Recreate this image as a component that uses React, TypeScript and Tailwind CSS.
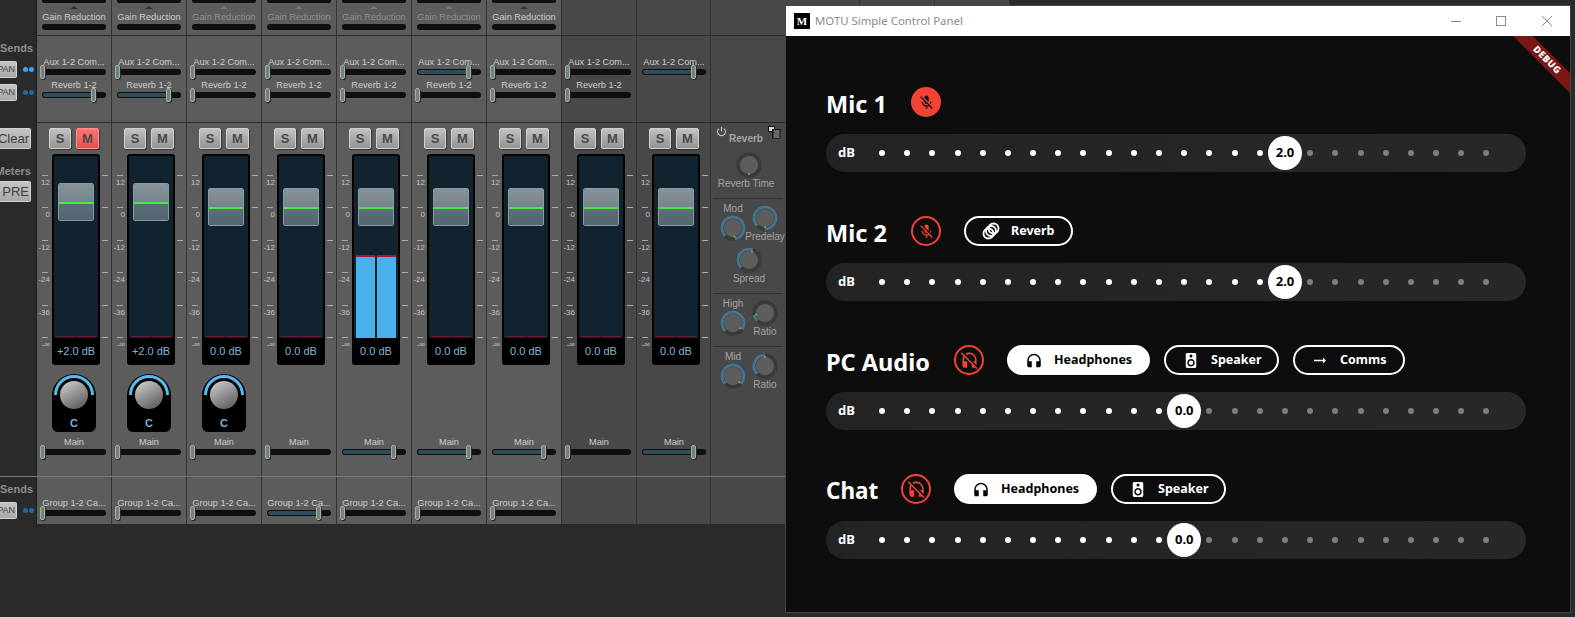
import React from "react";
import { MdMicOff, MdHeadphones, MdHeadsetOff, MdSpeaker, MdArrowRightAlt } from "react-icons/md";

const ticks = ["12", "0", "-12", "-24", "-36", "-∞"];
const stripW = ["w-[75px]", "w-[75px]", "w-[75px]", "w-[75px]", "w-[75px]", "w-[75px]", "w-[75px]", "w-[75px]", "w-[74px]"];
const stripBg = (i: number) => (i < 7 ? "bg-[#5c5c5c]" : "bg-[#484848]");

function Bar({ on }: { on?: boolean }) {
  return (
    <div className="relative ml-[5px] h-[6px] w-[64px] rounded-[3px] bg-[#0f0f0f]">
      {on && <div className="h-[6px] w-[52px] rounded-l-[3px] border border-[#0f0f0f] bg-[#2f4c5c]" />}
      <div
        className={
          "absolute top-[-4px] h-[14px] w-[5px] rounded-[2px] border border-[#a9a9a9] bg-[#6f8676] shadow-[1px_1px_1px_#2a2a2a] " +
          (on ? "left-[49px]" : "left-[-2px]")
        }
      />
    </div>
  );
}

function Label({ text, dim }: { text: string; dim?: boolean }) {
  return (
    <div
      className={
        "ml-[5px] h-[12px] w-[64px] whitespace-nowrap text-center text-[9.2px] leading-[12px] " +
        (dim ? "text-[#8f8f8f]" : "text-[#cdcdcd]")
      }
    >
      {text}
    </div>
  );
}

function SmallBtn({ children, w }: { children: React.ReactNode; w: string }) {
  return (
    <div
      className={
        "flex justify-end overflow-hidden rounded-r-[2px] border-y border-r border-[#d2d2d2] bg-gradient-to-b from-[#c4c4c4] to-[#a8a8a8] text-[#3f3f3f] " +
        w
      }
    >
      <span className="whitespace-nowrap pr-px">{children}</span>
    </div>
  );
}

function PanRow({ bright }: { bright?: boolean }) {
  return (
    <div className="flex items-center">
      <SmallBtn w="h-[17px] w-[17px] text-[9px] leading-[15px]">PAN</SmallBtn>
      <div className="ml-[6px] flex gap-px">
        <div className={"h-[5px] w-[5px] rounded-full " + (bright ? "bg-[#36a4f4]" : "bg-[#1f6a9e]")} />
        <div className={"h-[5px] w-[5px] rounded-full " + (bright ? "bg-[#36a4f4]" : "bg-[#1f6a9e]")} />
      </div>
    </div>
  );
}

function SM({ muted }: { muted?: boolean }) {
  const base = "flex h-[21px] items-center justify-center rounded-[2px] border border-[#cfcfcf] text-[13px] font-bold text-[#4a4a4a] shadow-[1px_1px_1px_#3a3a3a] ";
  return (
    <div className="flex gap-[5px] pl-[12px]">
      <div className={base + "w-[22px] bg-gradient-to-b from-[#c2c2c2] to-[#949494]"}>S</div>
      <div className={base + "w-[23px] " + (muted ? "border-[#ff8f8f] bg-gradient-to-b from-[#ff7474] to-[#e94f4f]" : "bg-gradient-to-b from-[#c2c2c2] to-[#949494]")}>M</div>
    </div>
  );
}

function Well({ db, raised, active }: { db: string; raised?: boolean; active?: boolean }) {
  return (
    <div className="flex h-[211px] w-[48px] flex-col rounded-[3px] bg-black">
      <div className="relative mx-[2px] mt-[2px] flex h-[182px] items-end gap-[2px] bg-[#10232f] px-[2px]">
        {[0, 1].map((k) => (
          <div key={k} className="flex w-[19px] flex-col">
            {active ? (
              <>
                <div className="h-[2px] bg-[#a3143a]" />
                <div className="h-[81px] bg-[#4ab0ea]" />
              </>
            ) : (
              <div className="mb-px h-px bg-[#6b1c2c]" />
            )}
          </div>
        ))}
        <div
          className={
            "absolute left-[4px] flex h-[38px] w-[36px] flex-col overflow-hidden rounded-[2px] border border-[#8a9aa0] " +
            (raised ? "top-[27px]" : "top-[32px]")
          }
        >
          <div className="h-[18px] bg-gradient-to-b from-[#87929a] to-[#75858c]" />
          <div className="h-[2px] shrink-0 bg-[#4fe64a]" />
          <div className="flex-1 bg-gradient-to-b from-[#5b6f79] to-[#536670]" />
        </div>
      </div>
      <div className="flex flex-1 items-center justify-center text-[11px] text-[#85b4d2]">{db}</div>
    </div>
  );
}

function Scale({ labels }: { labels?: boolean }) {
  return (
    <div className={"flex flex-col pt-[21px] " + (labels ? "w-[15px]" : "ml-[2px] w-[8px]")}>
      {ticks.map((t, i) => (
        <div key={t} className={i === 5 ? "h-[20px]" : "h-[32.4px]"}>
          <div className={"h-px w-[6px] " + (labels ? "ml-[5px] bg-[#a6a6a6]" : "bg-[#b0b0b0]")} />
          {labels && (
            <div className="whitespace-nowrap pr-[2px] pt-[2px] text-right text-[8px] leading-[9px] text-[#c4c4c4]">{t}</div>
          )}
        </div>
      ))}
    </div>
  );
}

function PanKnob({ id }: { id: number }) {
  return (
    <div className="ml-[15px] mt-[9px] flex h-[58px] w-[44px] flex-col items-center rounded-t-[22px] rounded-b-[6px] bg-black">
      <svg width="44" height="43" viewBox="0 0 44 43">
        <defs>
          <linearGradient id={"pk" + id} x1="0.2" y1="0" x2="0.8" y2="1">
            <stop offset="0" stopColor="#c9c9c9" />
            <stop offset="1" stopColor="#5a5a5a" />
          </linearGradient>
        </defs>
        <path d="M3.5 21 A18.5 18.5 0 0 1 40.5 21" fill="none" stroke="#5bb9ee" strokeWidth="3" />
        <circle cx="22" cy="21" r="14" fill={"url(#pk" + id + ")"} />
      </svg>
      <div className="text-[11px] font-bold leading-[12px] text-[#7fb2d4]">C</div>
    </div>
  );
}

function polar(r: number, a: number) {
  const t = ((a - 90) * Math.PI) / 180;
  return [14 + r * Math.cos(t), 14 + r * Math.sin(t)];
}

function Knob({ to, noArc }: { to: number; noArc?: boolean }) {
  const [x1, y1] = polar(11, -135);
  const [x2, y2] = polar(11, to);
  const [dx, dy] = polar(9, to);
  return (
    <svg width="28" height="28" viewBox="0 0 28 28" className="shrink-0">
      <circle cx="14" cy="14" r="11" fill="none" stroke="#3a3a3a" strokeWidth="3.5" />
      {!noArc && (
        <path
          d={`M${x1} ${y1} A11 11 0 ${to + 135 > 180 ? 1 : 0} 1 ${x2} ${y2}`}
          fill="none"
          stroke="#44738f"
          strokeWidth="3"
        />
      )}
      <circle cx="14" cy="14" r="9" fill="#5d5d5d" />
      <circle cx={dx} cy={dy} r="1" fill="#a5a53c" />
    </svg>
  );
}

const revText = "text-[10px] leading-[12px] text-[#a3a3a3] whitespace-nowrap text-center";

function KnobPair({ title, left, right, rightLabel }: { title: string; left: number; right: number; rightLabel: string }) {
  return (
    <div className="flex h-[43px] pl-[5px]">
      <div className="flex w-[30px] flex-col items-center">
        <div className={revText}>{title}</div>
        <div className="-mt-px">
          <Knob to={left} />
        </div>
      </div>
      <div className="ml-[2px] mt-px flex w-[30px] flex-col items-center">
        <Knob to={right} />
        <div className={revText + " -mt-px"}>{rightLabel}</div>
      </div>
    </div>
  );
}

function ReverbPanel() {
  return (
    <div className="flex h-full flex-col">
      <div className="mx-[2px] h-[76px] border-b border-[#2f2f2f]">
        <div className="flex h-[16px] items-start justify-between pl-[3px] pr-[2px] pt-[3px]">
          <svg width="11" height="11" viewBox="0 0 11 11" fill="none" stroke="#c9c9c9" strokeWidth="1.1">
            <path d="M3 2.6a4 4 0 1 0 5 0" />
            <path d="M5.5 1v4.5" />
          </svg>
          <svg width="13" height="13" viewBox="0 0 13 13">
            <rect x="0.5" y="0.5" width="6" height="5" fill="#d5d5d5" stroke="#111" />
            <rect x="4" y="3" width="8.5" height="9.5" fill="#111" />
            <path d="M5.5 5h6M5.5 7h6M5.5 9h6M5.5 11h6" stroke="#cfcfcf" strokeWidth="0.9" />
          </svg>
        </div>
        <div className={revText + " -mt-[6px] pr-[4px] font-bold"}>Reverb</div>
        <div className="mt-[6px] flex justify-center pl-[2px]">
          <Knob to={180} noArc />
        </div>
        <div className={revText + " -mt-px pr-[4px]"}>Reverb Time</div>
      </div>
      <div className="mx-[2px] h-[95px] border-b border-[#2f2f2f] pt-[4px]">
        <KnobPair title="Mod" left={170} right={180} rightLabel="Predelay" />
        <div className="flex flex-col items-center pl-[2px]">
          <Knob to={20} />
          <div className={revText + " -mt-px"}>Spread</div>
        </div>
      </div>
      <div className="mx-[2px] h-[53px] border-b border-[#2f2f2f] pt-[4px]">
        <KnobPair title="High" left={125} right={-100} rightLabel="Ratio" />
      </div>
      <div className="mx-[2px] pt-[4px]">
        <KnobPair title="Mid" left={135} right={0} rightLabel="Ratio" />
      </div>
    </div>
  );
}

function Mixer() {
  const aux = [0, 0, 0, 0, 0, 1, 0, 0, 1];
  const rev = [1, 1, 0, 0, 0, 0, 0, 0];
  const main = [0, 0, 0, 0, 1, 1, 1, 0, 1];
  const group = [0, 0, 0, 1, 0, 0, 0];
  const gainDim = [false, false, true, true, true, true, false];
  const dbs = ["+2.0 dB", "+2.0 dB", "0.0 dB", "0.0 dB", "0.0 dB", "0.0 dB", "0.0 dB", "0.0 dB", "0.0 dB"];
  const nums = [0, 1, 2, 3, 4, 5, 6, 7, 8];
  return (
    <div className="flex h-[617px] w-[785px] shrink-0 flex-col font-['Liberation_Sans']">
      <div className="flex h-[36px] border-b border-[#2c2c2c]">
        <div className="w-[37px] shrink-0 border-r border-[#1e1e1e]" />
        {nums.map((i) => (
          <div key={i} className={"border-r border-[#333] " + stripW[i] + " " + stripBg(i)}>
            {i < 7 && (
              <>
                <div className="ml-[5px] h-[3px] w-[64px] rounded-b-[2px] bg-[#0f0f0f]" />
                <div className="ml-[5px] mt-[3px] flex w-[64px] justify-center">
                  <div className={"h-0 w-0 border-x-[4px] border-b-[3px] border-x-transparent " + (gainDim[i] ? "border-b-[#777]" : "border-b-[#333]")} />
                </div>
                <div className="mt-[2px]">
                  <Label text="Gain Reduction" dim={gainDim[i]} />
                </div>
                <div className="ml-[5px] mt-px h-[6px] w-[64px] rounded-[3px] bg-[#0f0f0f]" />
              </>
            )}
          </div>
        ))}
        <div className="w-[74px] bg-[#484848]" />
      </div>

      <div className="flex h-[87px] border-b border-[#2c2c2c]">
        <div className="flex w-[37px] shrink-0 flex-col items-start border-r border-[#1e1e1e] pt-[5px]">
          <div className="h-[14px] text-[11px] font-bold leading-[14px] text-[#8d8d8d]">Sends</div>
          <div className="mt-[6px]"><PanRow bright /></div>
          <div className="mt-[6px]"><PanRow /></div>
        </div>
        {nums.map((i) => (
          <div key={i} className={"border-r border-[#333] pt-[20px] " + stripW[i] + " " + stripBg(i)}>
            <Label text="Aux 1-2 Com..." />
            <div className="mt-px"><Bar on={!!aux[i]} /></div>
            {i < 8 && (
              <>
                <div className="mt-[4px]"><Label text="Reverb 1-2" /></div>
                <div className="mt-px"><Bar on={!!rev[i]} /></div>
              </>
            )}
          </div>
        ))}
        <div className="w-[74px] bg-[#484848]" />
      </div>

      <div className="flex h-[354px] border-b border-[#777]">
        <div className="flex w-[37px] shrink-0 flex-col border-r border-[#1e1e1e] pt-[5px]">
          <SmallBtn w="h-[21px] w-[31px] text-[13px] leading-[19px]">Clear</SmallBtn>
          <div className="mt-[15px] flex h-[14px] w-[31px] justify-end overflow-hidden text-[11px] font-bold leading-[14px] text-[#8d8d8d]">Meters</div>
          <div className="mt-[3px]">
            <SmallBtn w="h-[21px] w-[31px] text-[13px] leading-[19px]">PRE</SmallBtn>
          </div>
        </div>
        {nums.map((i) => (
          <div key={i} className={"border-r border-[#333] pt-[5px] " + stripW[i] + " " + stripBg(i)}>
            <SM muted={i === 0} />
            <div className="mt-[5px] flex">
              <Scale labels />
              <Well db={dbs[i]} raised={i < 2} active={i === 4} />
              <Scale />
            </div>
            {i < 3 ? <PanKnob id={i} /> : <div className="mt-[9px] h-[58px]" />}
            <div className="mt-[4px]"><Label text="Main" /></div>
            <div className="mt-px"><Bar on={!!main[i]} /></div>
          </div>
        ))}
        <div className="w-[74px] bg-[#484848]">
          <ReverbPanel />
        </div>
      </div>

      <div className="flex h-[47px]">
        <div className="flex w-[37px] shrink-0 flex-col border-r border-[#1e1e1e] pt-[5px]">
          <div className="h-[14px] text-[11px] font-bold leading-[14px] text-[#8d8d8d]">Sends</div>
          <div className="mt-[6px]"><PanRow /></div>
        </div>
        {nums.map((i) => (
          <div key={i} className={"border-r border-[#333] pt-[20px] " + stripW[i] + " " + stripBg(i)}>
            {i < 7 && (
              <>
                <Label text="Group 1-2 Ca..." />
                <div className="mt-px"><Bar on={!!group[i]} /></div>
              </>
            )}
          </div>
        ))}
        <div className="w-[74px] bg-[#484848]" />
      </div>
    </div>
  );
}

function ReverbIcon() {
  return (
    <svg width="18" height="18" viewBox="0 0 18 18" fill="none" stroke="white" strokeWidth="1.9">
      <circle cx="11.5" cy="6.5" r="5" />
      <circle cx="9" cy="9" r="5" />
      <circle cx="6.5" cy="11.5" r="5" />
    </svg>
  );
}

function Pill({ icon, text, w, on }: { icon: React.ReactNode; text: string; w: string; on?: boolean }) {
  return (
    <div
      className={
        "flex h-[30px] items-center gap-[11px] rounded-full border-2 border-white pl-[16px] text-[12.5px] font-bold " +
        w +
        (on ? " bg-white text-black" : " text-white")
      }
    >
      <div className="flex w-[18px] items-center justify-center text-[21px]">{icon}</div>
      <span>{text}</span>
    </div>
  );
}

function Slider({ at, value }: { at: number; value: string }) {
  const cells = Array.from({ length: 25 }, (_, i) => i);
  return (
    <div className="mt-[17px] flex h-[38px] w-[700px] items-center rounded-full bg-gradient-to-r from-[#232323] to-[#282828]">
      <div className="w-[43.4px] shrink-0 pl-[12px] text-[13px] font-bold text-white">dB</div>
      {cells.map((i) => (
        <div key={i} className="flex w-[25.2px] shrink-0 justify-center">
          {i === at ? (
            <div className="flex h-[34px] w-[34px] shrink-0 items-center justify-center rounded-full bg-white text-[13px] font-bold text-black">
              {value}
            </div>
          ) : (
            <div className={"h-[6px] w-[6px] rounded-full " + (i < at ? "bg-white" : "bg-[#7e7e7e]")} />
          )}
        </div>
      ))}
    </div>
  );
}

function Header({ name, nameClass, children }: { name: string; nameClass: string; children: React.ReactNode }) {
  return (
    <div className="flex h-[30px] items-center gap-[24px]">
      <div className={"whitespace-nowrap pt-[4px] font-bold leading-[26px] text-white " + nameClass}>{name}</div>
      {children}
    </div>
  );
}

function MuteMic({ filled }: { filled?: boolean }) {
  return (
    <div
      className={
        "flex h-[30px] w-[30px] items-center justify-center rounded-full text-[17px] " +
        (filled ? "bg-[#f44336] text-[#0d0d0d]" : "border-2 border-[#f44336] text-[#f44336]")
      }
    >
      <MdMicOff />
    </div>
  );
}

function MuteHead() {
  return (
    <div className="flex h-[30px] w-[30px] items-center justify-center rounded-full border-2 border-[#f44336] text-[19px] text-[#f44336]">
      <MdHeadsetOff />
    </div>
  );
}

function ControlPanel() {
  return (
    <div className="relative flex-1 overflow-hidden bg-[#0d0d0d] pl-[40px] pt-[51px] font-['Noto_Sans']">
      <div className="absolute left-[711px] top-[17px] flex h-[14px] w-[100px] rotate-45 items-center justify-center bg-[#7a1616] text-[9.5px] font-black tracking-[0.5px] text-white">
        DEBUG
      </div>
      <Header name="Mic 1" nameClass="w-[61px] text-[23.5px]">
        <MuteMic filled />
      </Header>
      <Slider at={16} value="2.0" />

      <div className="mt-[44px]">
        <Header name="Mic 2" nameClass="w-[61px] text-[23.5px]">
          <MuteMic />
          <Pill w="w-[109px] -ml-px" icon={<ReverbIcon />} text="Reverb" />
        </Header>
      </div>
      <Slider at={16} value="2.0" />

      <div className="mt-[44px]">
        <Header name="PC Audio" nameClass="w-[104px] text-[23.5px]">
          <MuteHead />
          <div className="-ml-px flex gap-[14px]">
            <Pill w="w-[143px]" on icon={<MdHeadphones />} text="Headphones" />
            <Pill w="w-[115px]" icon={<MdSpeaker />} text="Speaker" />
            <Pill w="w-[112px]" icon={<MdArrowRightAlt />} text="Comms" />
          </div>
        </Header>
      </div>
      <Slider at={12} value="0.0" />

      <div className="mt-[44px]">
        <Header name="Chat" nameClass="w-[51px] text-[22.5px]">
          <MuteHead />
          <div className="-ml-px flex gap-[14px]">
            <Pill w="w-[143px]" on icon={<MdHeadphones />} text="Headphones" />
            <Pill w="w-[115px]" icon={<MdSpeaker />} text="Speaker" />
          </div>
        </Header>
      </div>
      <Slider at={12} value="0.0" />
    </div>
  );
}

function TitleBar() {
  return (
    <div className="flex h-[30px] shrink-0 items-center bg-white pl-[8px] pr-[18px] font-['Noto_Sans']">
      <div className="flex h-[16px] w-[16px] items-center justify-center bg-black font-['Liberation_Serif'] text-[11px] font-bold text-white">M</div>
      <div className="ml-[5px] flex-1 text-[11.4px] text-[#8d8790]">MOTU Simple Control Panel</div>
      <div className="h-px w-[10px] bg-[#8a8a8a]" />
      <div className="ml-[35px] h-[10px] w-[10px] border border-[#8a8a8a]" />
      <svg className="ml-[36px]" width="10" height="10" viewBox="0 0 10 10" stroke="#8a8a8a" strokeWidth="1">
        <path d="M0 0L10 10M10 0L0 10" />
      </svg>
    </div>
  );
}

export default function App() {
  return (
    <div className="flex h-[617px] w-[1575px] overflow-hidden bg-[#2a2a2a]">
      <Mixer />
      <div className="flex w-[786px] shrink-0 flex-col">
        <div className="flex h-[5px] shrink-0">
          <div className="w-[75px] border-r border-[#333] bg-[#484848]" />
          <div className="w-[75px] border-r border-[#333] bg-[#484848]" />
          <div className="w-[75px] border-r border-[#333] bg-[#484848]" />
        </div>
        <div className="flex h-[608px] flex-col border border-[#444]">
          <TitleBar />
          <ControlPanel />
        </div>
      </div>
    </div>
  );
}
